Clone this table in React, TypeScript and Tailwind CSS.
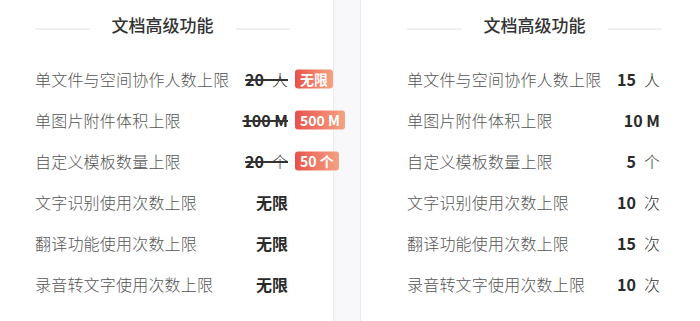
import type { ReactNode } from 'react'

type Row = {
  label: string
  value: ReactNode
  badge?: string
  strike?: boolean
}

function V({ n, u }: { n: string; u?: string }) {
  return (
    <>
      <b>{n}</b>
      {u && <span>{'\u2002' + u}</span>}
    </>
  )
}

const leftRows: Row[] = [
  { label: '单文件与空间协作人数上限', value: <V n="20" u="人" />, badge: '无限', strike: true },
  { label: '单图片附件体积上限', value: <V n="100 M" />, badge: '500 M', strike: true },
  { label: '自定义模板数量上限', value: <V n="20" u="个" />, badge: '50 个', strike: true },
  { label: '文字识别使用次数上限', value: <V n="无限" /> },
  { label: '翻译功能使用次数上限', value: <V n="无限" /> },
  { label: '录音转文字使用次数上限', value: <V n="无限" /> },
]

const rightRows: Row[] = [
  { label: '单文件与空间协作人数上限', value: <V n="15" u="人" /> },
  { label: '单图片附件体积上限', value: <V n="10 M" /> },
  { label: '自定义模板数量上限', value: <V n="5" u="个" /> },
  { label: '文字识别使用次数上限', value: <V n="10" u="次" /> },
  { label: '翻译功能使用次数上限', value: <V n="15" u="次" /> },
  { label: '录音转文字使用次数上限', value: <V n="10" u="次" /> },
]

function Badge({ text }: { text: string }) {
  return (
    <span className="absolute left-full top-1/2 -translate-y-1/2 ml-[7px] whitespace-nowrap rounded-[3px] bg-linear-to-r from-[#e8504b] to-[#f4a283] px-[5px] text-[14px] leading-[19px] font-bold text-white">
      {text}
    </span>
  )
}

function FeatureCard({ rows }: { rows: Row[] }) {
  return (
    <div className="w-[255px]">
      {/* Header */}
      <div className="flex h-[50px] items-center">
        <div className="mt-[7px] h-[2px] flex-1 bg-[#f0f0f0]" />
        <div className="px-[22px] text-[17px] font-medium text-[#333]">文档高级功能</div>
        <div className="mt-[7px] h-[2px] flex-1 bg-[#f0f0f0]" />
      </div>

      {/* Rows */}
      <div className="mt-[8px]">
        {rows.map((row) => (
          <div key={row.label} className="flex h-[41px] items-center justify-between">
            <span className="text-[16px] font-light tracking-[0.2px] text-[#555]">{row.label}</span>
            <span className="relative mr-[2px] whitespace-nowrap text-[16px] font-light text-[#333] [&_b]:font-bold [&_b]:text-[#2a2a2a]">
              <span className={row.strike ? 'line-through decoration-2 decoration-[#333]' : ''}>{row.value}</span>
              {row.badge && <Badge text={row.badge} />}
            </span>
          </div>
        ))}
      </div>
    </div>
  )
}

export default function App() {
  return (
    <div className="flex h-[321px] w-[700px] overflow-hidden bg-white font-['Noto_Sans_CJK_SC',sans-serif]">
      <div className="w-[333px] shrink-0 pl-[35px]">
        <FeatureCard rows={leftRows} />
      </div>
      <div className="w-[28px] shrink-0 border-x border-[#ececef] bg-[#f8f8fa]" />
      <div className="flex-1 pl-[46px]">
        <FeatureCard rows={rightRows} />
      </div>
    </div>
  )
}
